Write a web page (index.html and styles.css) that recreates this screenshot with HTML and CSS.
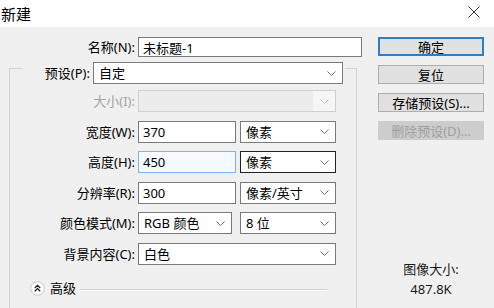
FILE: index.html
```html
<!DOCTYPE html>
<html lang="zh-CN">
<head>
  <meta charset="UTF-8" />
  <title>新建</title>
  <link rel="stylesheet" href="styles.css">
</head>
<body>

  <!-- === TITLE BAR === -->
  <div class="titlebar">
    <span class="title">新建</span>
    <svg class="close" viewBox="0 0 12 12" width="12" height="12">
      <path d="M0.5 0.5 L11.5 11.5 M11.5 0.5 L0.5 11.5" stroke="#333" stroke-width="1" fill="none" />
    </svg>
  </div>

  <div class="dialog">

    <!-- === FORM === -->
    <div class="main">
      <div class="row name-row">
        <label class="lbl">名称(N):</label>
        <input class="field w-name" type="text" value="未标题-1" />
      </div>

      <fieldset class="group">
        <legend class="preset">
          <span class="lbl">预设(P):</span>
          <div class="select w-preset"><span>自定</span><span class="arrow"><svg viewBox="0 0 9 5" width="9" height="5"><path d="M0.5 0.5 L4.5 4.5 L8.5 0.5" /></svg></span></div>
        </legend>

        <div class="rows">
          <div class="row">
            <span class="lbl disabled">大小(I):</span>
            <div class="select w-full disabled"><span></span><span class="arrow"><svg viewBox="0 0 9 5" width="9" height="5"><path d="M0.5 0.5 L4.5 4.5 L8.5 0.5" /></svg></span></div>
          </div>
          <div class="row">
            <span class="lbl">宽度(W):</span>
            <input class="field w-num" type="text" value="370" />
            <div class="select w-unit"><span>像素</span><span class="arrow"><svg viewBox="0 0 9 5" width="9" height="5"><path d="M0.5 0.5 L4.5 4.5 L8.5 0.5" /></svg></span></div>
          </div>
          <div class="row">
            <span class="lbl">高度(H):</span>
            <input class="field w-num focus" type="text" value="450" />
            <div class="select w-unit active"><span>像素</span><span class="arrow"><svg viewBox="0 0 9 5" width="9" height="5"><path d="M0.5 0.5 L4.5 4.5 L8.5 0.5" /></svg></span></div>
          </div>
          <div class="row">
            <span class="lbl">分辨率(R):</span>
            <input class="field w-num" type="text" value="300" />
            <div class="select w-unit"><span>像素/英寸</span><span class="arrow"><svg viewBox="0 0 9 5" width="9" height="5"><path d="M0.5 0.5 L4.5 4.5 L8.5 0.5" /></svg></span></div>
          </div>
          <div class="row">
            <span class="lbl">颜色模式(M):</span>
            <div class="select w-mode"><span>RGB 颜色</span><span class="arrow"><svg viewBox="0 0 9 5" width="9" height="5"><path d="M0.5 0.5 L4.5 4.5 L8.5 0.5" /></svg></span></div>
            <div class="select w-unit wide-gap"><span>8 位</span><span class="arrow"><svg viewBox="0 0 9 5" width="9" height="5"><path d="M0.5 0.5 L4.5 4.5 L8.5 0.5" /></svg></span></div>
          </div>
          <div class="row">
            <span class="lbl">背景内容(C):</span>
            <div class="select w-full"><span>白色</span><span class="arrow"><svg viewBox="0 0 9 5" width="9" height="5"><path d="M0.5 0.5 L4.5 4.5 L8.5 0.5" /></svg></span></div>
          </div>
        </div>

        <div class="advanced">
          <svg class="adv-icon" viewBox="0 0 15 15" width="15" height="15">
            <circle cx="7.5" cy="7.5" r="6.8" fill="#fff" stroke="#c9c9c9" stroke-width="1" />
            <path d="M4.8 7 L7.5 4.4 L10.2 7 M4.8 10.2 L7.5 7.6 L10.2 10.2" stroke="#222" stroke-width="1.3" fill="none" />
          </svg>
          <span class="adv-text">高级</span>
          <span class="adv-line"></span>
        </div>
      </fieldset>
    </div>

    <!-- === BUTTONS === -->
    <div class="side">
      <button class="btn default">确定</button>
      <button class="btn">复位</button>
      <button class="btn">存储预设(S)...</button>
      <button class="btn" disabled>删除预设(D)...</button>

      <div class="size-info">
        <div>图像大小:</div>
        <div>487.8K</div>
      </div>
    </div>
  </div>

</body>
</html>
```

FILE: styles.css
```css
* {
  margin: 0;
  padding: 0;
  box-sizing: border-box;
}

body, html {
  height: 100%;
  overflow: hidden;
}

body {
  background: #f0f0f0;
  color: #000;
  font-family: "Noto Sans", "Noto Sans CJK SC", sans-serif;
  font-size: 13px;
  line-height: 18px;
}

/* === TITLE BAR === */
.titlebar {
  height: 27px;
  background: #fff;
  display: flex;
  align-items: center;
  justify-content: space-between;
  padding: 0 14px 0 1px;
}

.title {
  font-size: 15px;
  line-height: 20px;
}

.close {
  display: block;
  margin-top: -3px;
}

/* === LAYOUT === */
.dialog {
  display: flex;
  padding-top: 10px;
}

.main {
  width: 357px;
  flex: none;
}

.side {
  width: 106px;
  margin-left: 21px;
  display: flex;
  flex-direction: column;
  gap: 9px;
}

/* === ROWS === */
.row {
  display: flex;
  align-items: center;
  height: 22px;
}

.lbl {
  flex: none;
  text-align: right;
  padding-right: 3px;
  white-space: nowrap;
}

.lbl.disabled {
  color: #a3a3a3;
}

.name-row {
  height: 20px;
}

.name-row .lbl {
  width: 138px;
}

.rows .lbl {
  width: 128px;
}

.rows {
  display: flex;
  flex-direction: column;
  gap: 8.6px;
}

/* === CONTROLS === */
.field {
  flex: none;
  height: 100%;
  border: 1px solid #7a7a7a;
  background: #fff;
  font: inherit;
  color: #000;
  padding: 0 4px;
  outline: none;
}

.field.focus {
  border-color: #7eb4ea;
  background: #f4faff;
}

.select {
  flex: none;
  height: 100%;
  display: flex;
  align-items: center;
  justify-content: space-between;
  border: 1px solid #7a7a7a;
  background: #fff;
  padding-left: 5px;
  white-space: nowrap;
}

.select.active {
  border-color: #222;
}

.arrow {
  display: flex;
  align-items: center;
  justify-content: center;
  width: 22px;
  height: 100%;
}

.arrow svg path {
  fill: none;
  stroke: #707070;
  stroke-width: 1;
}

.select.disabled {
  border-color: #cfcfcf;
  background: #ececec;
}

.select.disabled .arrow {
  background: #f6f6f6;
}

.select.disabled .arrow svg path {
  stroke: #c2c2c2;
}

.w-name { width: 224px; }
.w-preset { width: 250px; }
.w-full { width: 198px; }
.w-num { width: 98px; }
.w-unit { width: 96px; margin-left: 4px; }
.w-mode { width: 94px; }
.w-unit.wide-gap { margin-left: 8px; }

/* === GROUP BOX === */
.group {
  margin: -5px 0 0 9px;
  border: 1px solid #d3d3d3;
  padding: 6px 0 0 0;
  height: 270px;
  min-width: 0;
}

.preset {
  display: flex;
  align-items: center;
  margin-left: 12px;
  padding: 10px 2px 0 0;
}

.preset .lbl {
  width: 71px;
  height: 22px;
  line-height: 22px;
}

.preset .select {
  height: 22px;
}

.advanced {
  display: flex;
  align-items: center;
  height: 15px;
  margin-top: 16px;
  padding-left: 20px;
}

.adv-icon {
  display: block;
  flex: none;
}

.adv-text {
  margin-left: 5px;
}

.adv-line {
  width: 247px;
  margin-left: 4px;
  margin-top: 3px;
  border-top: 1px solid #d3d3d3;
  border-bottom: 1px solid #fff;
}

/* === BUTTONS === */
.btn {
  height: 19px;
  border: 1px solid #adadad;
  background: #e1e1e1;
  font: inherit;
  line-height: 16px;
  color: #000;
  text-align: center;
}

.btn.default {
  border: 2px solid #2f7fc4;
}

.btn:disabled {
  background: #cdcdcd;
  border-color: #cdcdcd;
  color: #a0a0a0;
}

.size-info {
  margin-top: 110px;
  text-align: center;
  line-height: 20px;
  color: #1a1a1a;
}
```
